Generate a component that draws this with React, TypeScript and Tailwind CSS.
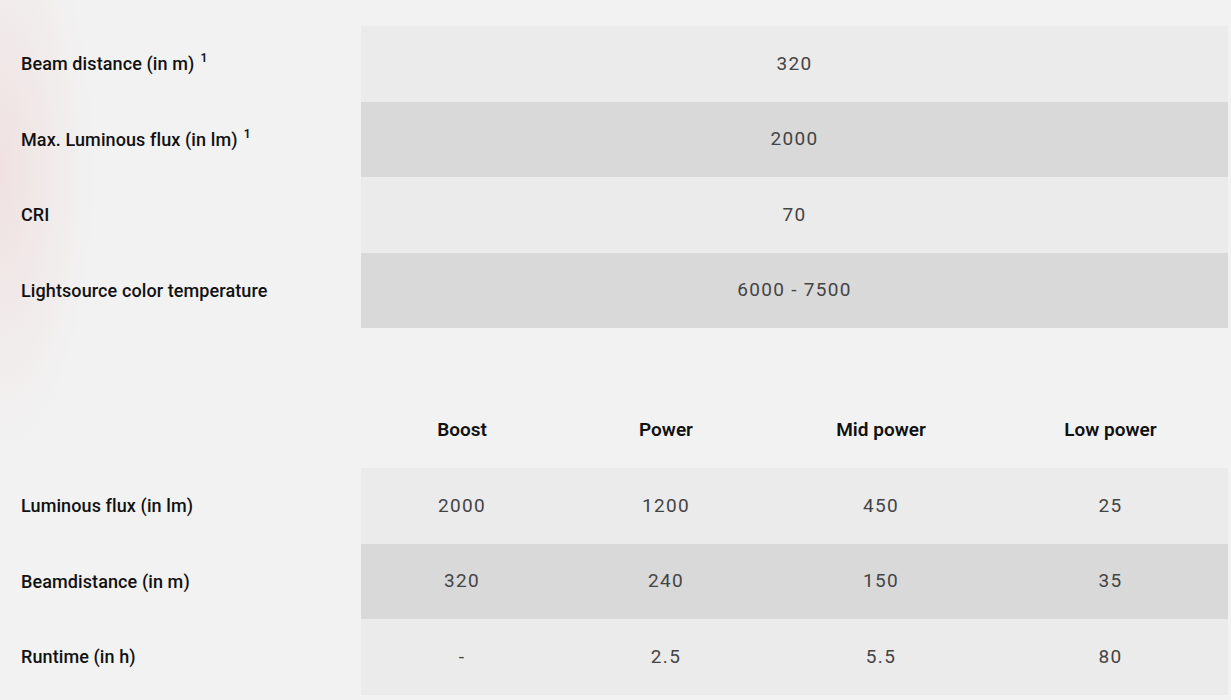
import React from "react";

const specs = [
  { label: "Beam distance (in m)", note: true, value: "320" },
  { label: "Max. Luminous flux (in lm)", note: true, value: "2000" },
  { label: "CRI", note: false, value: "70" },
  { label: "Lightsource color temperature", note: false, value: "6000 - 7500" },
];

const modes = ["Boost", "Power", "Mid power", "Low power"];
const colWidths = ["w-[202px]", "w-[206px]", "w-[224px]", "w-[235px]"];

const runtime = [
  { label: "Luminous flux (in lm)", values: ["2000", "1200", "450", "25"] },
  { label: "Beamdistance (in m)", values: ["320", "240", "150", "35"] },
  { label: "Runtime (in h)", values: ["-", "2.5", "5.5", "80"] },
];

const font = { fontFamily: "Roboto, 'Open Sans', sans-serif" };

const Label: React.FC<{ text: string; note?: boolean }> = ({ text, note }) => (
  <div className="w-[361px] shrink-0 pl-[21px] text-[18px] font-medium text-[#111] tracking-[0.1px]">
    {text}
    {note && (
      <sup className="ml-[6px] text-[12px] font-semibold relative -top-[8px]">1</sup>
    )}
  </div>
);

const App: React.FC = () => {
  return (
    <div
      className="w-[1231px] h-[700px] overflow-hidden bg-[#f2f2f2] bg-[radial-gradient(ellipse_95px_280px_at_0px_170px,rgba(236,190,190,0.32),rgba(242,242,242,0))] pt-[26px]"
      style={font}
    >
      <div className="flex flex-col">
        {specs.map((s, i) => (
          <div key={s.label} className="flex items-center h-[75.5px]">
            <Label text={s.label} note={s.note} />
            <div
              className={`w-[867px] h-full flex items-center justify-center text-[19px] text-[#444] tracking-[1.3px] ${
                i % 2 === 0 ? "bg-[#ebebeb]" : "bg-[#d9d9d9]"
              }`}
            >
              {s.value}
            </div>
          </div>
        ))}
      </div>

      <div className="flex items-center h-[75px] mt-[65px]">
        <div className="w-[361px] shrink-0" />
        {modes.map((m, i) => (
          <div
            key={m}
            className={`${colWidths[i]} text-center text-[19px] font-semibold text-[#111]`}
          >
            {m}
          </div>
        ))}
      </div>

      <div className="flex flex-col">
        {runtime.map((r, i) => (
          <div key={r.label} className="flex items-center h-[75.5px]">
            <Label text={r.label} />
            <div
              className={`flex h-full ${i % 2 === 0 ? "bg-[#ebebeb]" : "bg-[#d9d9d9]"}`}
            >
              {r.values.map((v, j) => (
                <div
                  key={j}
                  className={`${colWidths[j]} flex items-center justify-center text-[19px] text-[#444] tracking-[1.3px]`}
                >
                  {v}
                </div>
              ))}
            </div>
          </div>
        ))}
      </div>
    </div>
  );
};

export default App;
